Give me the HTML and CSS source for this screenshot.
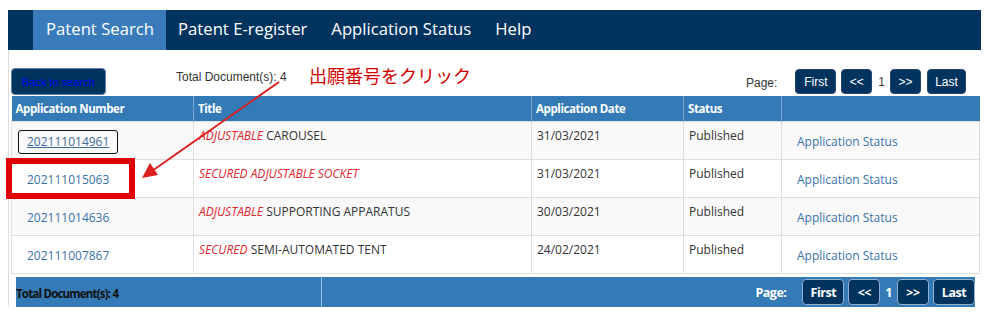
FILE: index.html
```html
<!DOCTYPE html>
<html lang="en">
<head>
    <meta charset="UTF-8"/>
    <title>Patent Search - Results</title>
    <link rel="stylesheet" href="styles.css">
</head>
<body>
<div class="page">
    <nav class="navbar">
        <a class="tab active" href="#">Patent Search</a>
        <a class="tab" href="#">Patent E-register</a>
        <a class="tab" href="#">Application Status</a>
        <a class="tab" href="#">Help</a>
    </nav>

    <div class="panel">
        <div class="toolbar">
            <button class="back">Back to search</button>
            <span class="total">Total Document(s): 4</span>
            <div class="pager">
                <span class="pager-label">Page:</span>
                <button class="pg pg-wide">First</button>
                <button class="pg">&lt;&lt;</button>
                <span class="pg-num">1</span>
                <button class="pg">&gt;&gt;</button>
                <button class="pg pg-last">Last</button>
            </div>
        </div>

        <table class="results">
            <colgroup>
                <col class="c-num">
                <col class="c-title">
                <col class="c-date">
                <col class="c-status">
                <col class="c-link">
            </colgroup>
            <thead>
            <tr>
                <th>Application Number</th>
                <th>Title</th>
                <th>Application Date</th>
                <th>Status</th>
                <th></th>
            </tr>
            </thead>
            <tbody>
            <tr class="odd">
                <td class="link-cell"><a class="focused" href="#">202111014961</a></td>
                <td><em>ADJUSTABLE</em> CAROUSEL</td>
                <td>31/03/2021</td>
                <td>Published</td>
                <td class="link-cell"><a href="#">Application Status</a></td>
            </tr>
            <tr>
                <td class="link-cell"><a href="#">202111015063</a></td>
                <td><em>SECURED ADJUSTABLE SOCKET</em></td>
                <td>31/03/2021</td>
                <td>Published</td>
                <td class="link-cell"><a href="#">Application Status</a></td>
            </tr>
            <tr class="odd">
                <td class="link-cell"><a href="#">202111014636</a></td>
                <td><em>ADJUSTABLE</em> SUPPORTING APPARATUS</td>
                <td>30/03/2021</td>
                <td>Published</td>
                <td class="link-cell"><a href="#">Application Status</a></td>
            </tr>
            <tr>
                <td class="link-cell"><a href="#">202111007867</a></td>
                <td><em>SECURED</em> SEMI-AUTOMATED TENT</td>
                <td>24/02/2021</td>
                <td>Published</td>
                <td class="link-cell"><a href="#">Application Status</a></td>
            </tr>
            </tbody>
        </table>

        <div class="footer">
            <div class="footer-total">Total Document(s): 4</div>
            <div class="footer-pager">
                <span class="footer-label">Page:</span>
                <button class="fpg fpg-wide">First</button>
                <button class="fpg">&lt;&lt;</button>
                <span class="fpg-num">1</span>
                <button class="fpg">&gt;&gt;</button>
                <button class="fpg fpg-wide">Last</button>
            </div>
        </div>
    </div>
</div>

<!-- annotation drawn over the screenshot -->
<div class="note">出願番号をクリック</div>
<div class="highlight"></div>
<svg class="arrow" width="986" height="321" viewBox="0 0 986 321">
    <line x1="279" y1="82" x2="152" y2="171" stroke="#dc1f1f" stroke-width="2"/>
    <polygon points="142,178 158,175 150,163" fill="#dc1f1f"/>
</svg>
</body>
</html>
```

FILE: styles.css
```css
body {
    margin: 10px 5px 0 8px;
    background: #fff;
    font-family: "Open Sans", "Liberation Sans", sans-serif;
    color: #333;
}

.page {
    width: 973px;
}

.navbar {
    display: flex;
    height: 40px;
    background-color: #01335f;
    padding-left: 25px;
}

.tab {
    display: flex;
    align-items: center;
    padding: 0 12px 3px;
    color: #fff;
    text-decoration: none;
    font-size: 16.7px;
}

.tab.active {
    background-color: #3a7bbb;
    padding: 0 12px 3px 13px;
}

.panel {
    border-left: 1px solid #dcdcdc;
    padding: 0 2px;
}

.toolbar {
    display: flex;
    align-items: flex-start;
    height: 46px;
    padding-top: 18px;
    box-sizing: border-box;
    font-family: "Liberation Sans", Arial, sans-serif;
    font-size: 12px;
}

.back {
    width: 95px;
    height: 27px;
    background-color: #01335f;
    border: 1px solid #5f7fa3;
    border-radius: 4px;
    color: #0000ee;
    font-family: "Liberation Sans", Arial, sans-serif;
    font-size: 11px;
    padding: 0;
}

.total {
    margin-left: 70px;
    margin-top: 1px;
    line-height: 16px;
}

.pager {
    display: flex;
    align-items: center;
    gap: 5px;
    margin-left: auto;
    margin-right: 13px;
    margin-top: 1px;
}

.pager-label {
    margin-right: 13px;
    margin-top: 3px;
}

.pg {
    width: 31px;
    height: 25px;
    padding: 0;
    background-color: #01335f;
    border: 1px solid #22466e;
    border-radius: 4px;
    color: #fff;
    font-family: "Liberation Sans", Arial, sans-serif;
    font-size: 12px;
}

.pg-wide {
    width: 41px;
}

.pg-last {
    width: 39px;
    margin-left: 1px;
}

.pg-num {
    margin: 0 0 0 1px;
}

.results {
    width: 968px;
    border-collapse: collapse;
    table-layout: fixed;
    font-size: 12px;
}

.c-num { width: 182px; }
.c-title { width: 338px; }
.c-date { width: 152px; }
.c-status { width: 98px; }
.c-link { width: 198px; }

.results th {
    height: 25px;
    padding: 0 4px;
    background-color: #337ab7;
    color: #fff;
    font-size: 11.5px;
    font-weight: bold;
    letter-spacing: -0.4px;
    text-align: left;
    border-left: 1px solid #7aa6d2;
}

.results th:first-child {
    border-left: none;
}

.results td {
    height: 23px;
    padding: 5px 5px 9px;
    vertical-align: top;
    border: 1px solid #dedede;
    line-height: 18px;
}

.results tr.odd td {
    background-color: #f9f9f9;
}

.results em {
    color: #e3262c;
}

.results td.link-cell {
    padding: 8px 6px 4px;
}

.link-cell a {
    display: inline-block;
    padding: 2px 8px;
    border: 1px solid transparent;
    border-radius: 3px;
    color: #3872ad;
    text-decoration: none;
    line-height: 18px;
}

.link-cell a.focused {
    border-color: #111;
    color: #3d6a99;
    text-decoration: underline;
}

.footer {
    display: flex;
    height: 30px;
    margin: 3px 4px 0 5px;
    background-color: #337ab7;
    font-size: 11.5px;
    font-weight: bold;
    letter-spacing: -0.5px;
}

.footer-total {
    display: flex;
    align-items: center;
    width: 305px;
    border-right: 1px solid #a6c4e2;
    color: #111;
    padding-top: 2px;
    letter-spacing: -0.8px;
}

.footer-pager {
    flex: 1;
    display: flex;
    align-items: center;
    justify-content: flex-end;
    gap: 4px;
    color: #fff;
    font-size: 12.5px;
}

.footer-label {
    margin-right: 12px;
}

.fpg {
    width: 32px;
    height: 26px;
    padding: 0;
    background-color: #01335f;
    border: 1px solid #8fb0d2;
    border-radius: 4px;
    color: #fff;
    font-family: "Open Sans", sans-serif;
    font-size: 12.5px;
    font-weight: bold;
    letter-spacing: -0.5px;
}

.fpg-wide {
    width: 42px;
}

.fpg-num {
    margin: 0 1px;
}

.note {
    position: absolute;
    left: 309px;
    top: 63px;
    color: #d40000;
    font-family: "Noto Sans CJK JP", sans-serif;
    font-size: 18px;
    line-height: 24px;
}

.highlight {
    position: absolute;
    left: 6px;
    top: 158px;
    width: 129px;
    height: 41px;
    box-sizing: border-box;
    border: 6px solid #e00000;
}

.arrow {
    position: absolute;
    left: 0;
    top: 0;
    pointer-events: none;
}
```
